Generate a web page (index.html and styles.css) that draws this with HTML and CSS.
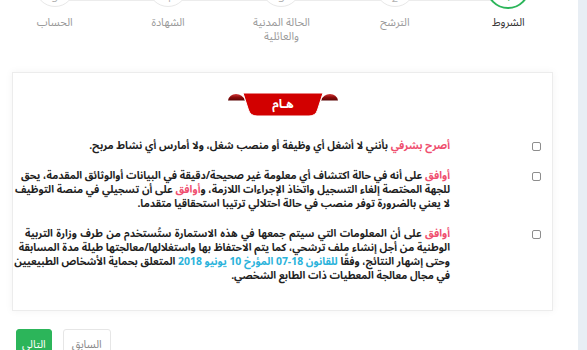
FILE: index.html
```html
<!DOCTYPE html>
<html lang="ar" dir="rtl">
<head>
<meta charset="utf-8">
<title>الشروط</title>
<link rel="stylesheet" href="styles.css">
</head>
<body>
<aside class="side"></aside>
<main class="main">
  <div class="stepper">
    <div class="step active"><div class="dot-wrap"><span class="dot">1</span></div><div class="label">الشروط</div></div>
    <div class="step"><div class="dot-wrap"><span class="dot">2</span></div><div class="label">الترشح</div></div>
    <div class="step"><div class="dot-wrap"><span class="dot">3</span></div><div class="label">الحالة المدنية<br>والعائلية</div></div>
    <div class="step"><div class="dot-wrap"><span class="dot">4</span></div><div class="label">الشهادة</div></div>
    <div class="step"><div class="dot-wrap"><span class="dot">5</span></div><div class="label">الحساب</div></div>
  </div>

  <section class="card">
    <div class="ribbon">
      <svg width="110" height="24" viewBox="0 0 110 24">
        <defs>
          <linearGradient id="fold" x1="0" y1="0" x2="0" y2="1">
            <stop offset="0" stop-color="#d23a3a"/>
            <stop offset="0.5" stop-color="#8e0b0b"/>
            <stop offset="1" stop-color="#5a0404"/>
          </linearGradient>
        </defs>
        <path d="M0 7.5 Q1.5 1 8 1 Q14.5 1 17 7.5 Z" fill="url(#fold)"/>
        <path d="M93 7.5 Q95.5 1 102 1 Q108.5 1 110 7.5 Z" fill="url(#fold)"/>
        <path d="M15 0 H95 L89.5 17 Q87.5 23 81 23 H29 Q22.5 23 20.5 17 Z" fill="#d20000" stroke="#fff" stroke-width="1"/>
        <text x="55" y="15" text-anchor="middle" class="ribbon-text">هـام</text>
      </svg>
    </div>

    <div class="item">
      <input type="checkbox" class="check">
      <p class="txt"><span class="ln last"><span class="pink">أصرح بشرفي</span> بأنني لا أشغل أي وظيفة أو منصب شغل، ولا أمارس أي نشاط مربح.</span></p>
    </div>

    <div class="item">
      <input type="checkbox" class="check">
      <p class="txt">
        <span class="ln"><span class="pink">أوافق</span> على أنه في حالة اكتشاف أي معلومة غير صحيحة/دقيقة في البيانات أوالوثائق المقدمة، يحق</span>
        <span class="ln">للجهة المختصة إلغاء التسجيل واتخاذ الإجراءات اللازمة، و<span class="pink">أوافق</span> على أن تسجيلي في منصة التوظيف</span>
        <span class="ln last">لا يعني بالضرورة توفر منصب في حالة احتلالي ترتيبا استحقاقيا متقدما.</span>
      </p>
    </div>

    <div class="item">
      <input type="checkbox" class="check">
      <p class="txt">
        <span class="ln"><span class="pink">أوافق</span> على أن المعلومات التي سيتم جمعها في هذه الاستمارة ستُستخدم من طرف وزارة التربية</span>
        <span class="ln">الوطنية من أجل إنشاء ملف ترشحي، كما يتم الاحتفاظ بها واستغلالها/معالجتها طيلة مدة المسابقة</span>
        <span class="ln">وحتى إشهار النتائج، وفقًا <span class="blue">للقانون 18‐07 المؤرخ 10 يونيو 2018</span> المتعلق بحماية الأشخاص الطبيعيين</span>
        <span class="ln last">في مجال معالجة المعطيات ذات الطابع الشخصي.</span>
      </p>
    </div>
  </section>

  <div class="actions">
    <button class="btn btn-prev" type="button">السابق</button>
    <button class="btn btn-next" type="button">التالي</button>
  </div>
</main>
</body>
</html>
```

FILE: styles.css
```css
html, body {
  margin: 0;
  padding: 0;
}

body {
  direction: rtl;
  display: flex;
  background: #ffffff;
  font-family: "Noto Sans Arabic", "Noto Sans", "DejaVu Sans", sans-serif;
  color: #222;
  overflow: hidden;
  height: 350px;
}

.side {
  flex: 0 0 9px;
  background: #e8eef4;
  min-height: 350px;
}

.main {
  flex: 1;
  min-width: 0;
}

/* stepper */
.stepper {
  display: flex;
  position: relative;
  margin: -36px 0 0 -2px;
  padding-right: 13px;
}

.stepper::before {
  content: "";
  position: absolute;
  top: 36px;
  left: 57px;
  right: 70px;
  height: 1px;
  background: #ececec;
}

.step {
  flex: 1 1 0;
  display: flex;
  flex-direction: column;
  align-items: center;
}

.dot-wrap {
  height: 46px;
  width: 46px;
  display: flex;
  align-items: center;
  justify-content: center;
  position: relative;
  z-index: 1;
}

.dot {
  box-sizing: border-box;
  width: 40px;
  height: 40px;
  border-radius: 50%;
  border: 1px solid #e8e8e8;
  background: #fff;
  display: flex;
  align-items: flex-end;
  justify-content: center;
  padding-bottom: 3px;
  font-size: 11px;
  line-height: 11px;
  color: #b0b0b0;
  font-family: "Open Sans", sans-serif;
}

.step.active .dot {
  width: 44px;
  height: 44px;
  border: 2px solid #2cb55a;
  padding-bottom: 5px;
  color: #2cb55a;
}

.label {
  margin-top: 6px;
  font-size: 11px;
  line-height: 14px;
  color: #9a9a9a;
  text-align: center;
}

.step.active .label {
  color: #333;
}

/* card */
.card {
  margin: 28px 25px 0 12px;
  border: 1px solid #ececec;
  box-shadow: 0 0 8px rgba(0, 0, 0, 0.05);
  background: #fff;
  padding: 20px 11px 27px 12px;
}

.ribbon {
  display: flex;
  justify-content: center;
  margin-bottom: 22px;
}

.ribbon svg {
  display: block;
}

.ribbon-text {
  fill: #fff;
  font-size: 12px;
  font-weight: 700;
  font-family: "Noto Sans Arabic", "DejaVu Sans", sans-serif;
}

.item {
  display: flex;
  align-items: flex-start;
  gap: 82px;
}

.item + .item {
  margin-top: 16px;
}

.check {
  appearance: none;
  -webkit-appearance: none;
  box-sizing: border-box;
  flex: 0 0 9px;
  width: 9px;
  height: 9px;
  margin: 3px 0 0 0;
  border: 1px solid #8d8d8d;
  border-radius: 2px;
  background: #fff;
}

.txt {
  flex: 1;
  min-width: 0;
  margin: 0;
  font-size: 10.4px;
  line-height: 14px;
  font-weight: 700;
  color: #1f1f1f;
}

.ln {
  display: block;
  white-space: nowrap;
  text-align: justify;
  text-align-last: justify;
}

.ln.last {
  text-align-last: start;
}

.pink {
  color: #ef4f6f;
}

.blue {
  color: #2bb3db;
}

/* buttons */
.actions {
  display: flex;
  justify-content: flex-end;
  gap: 11px;
  margin: 18px 0 0 16px;
}

.btn {
  font-family: "Noto Sans Arabic", "Noto Sans", "DejaVu Sans", sans-serif;
  font-size: 11px;
  height: 30px;
  padding: 0 5px;
  border-radius: 3px;
  cursor: pointer;
}

.btn-next {
  background: #2cb55a;
  border: 1px solid #2cb55a;
  color: #fff;
}

.btn-prev {
  background: #fff;
  border: 1px solid #e6e6e6;
  color: #8a8a8a;
  padding: 0 8px;
}
```
